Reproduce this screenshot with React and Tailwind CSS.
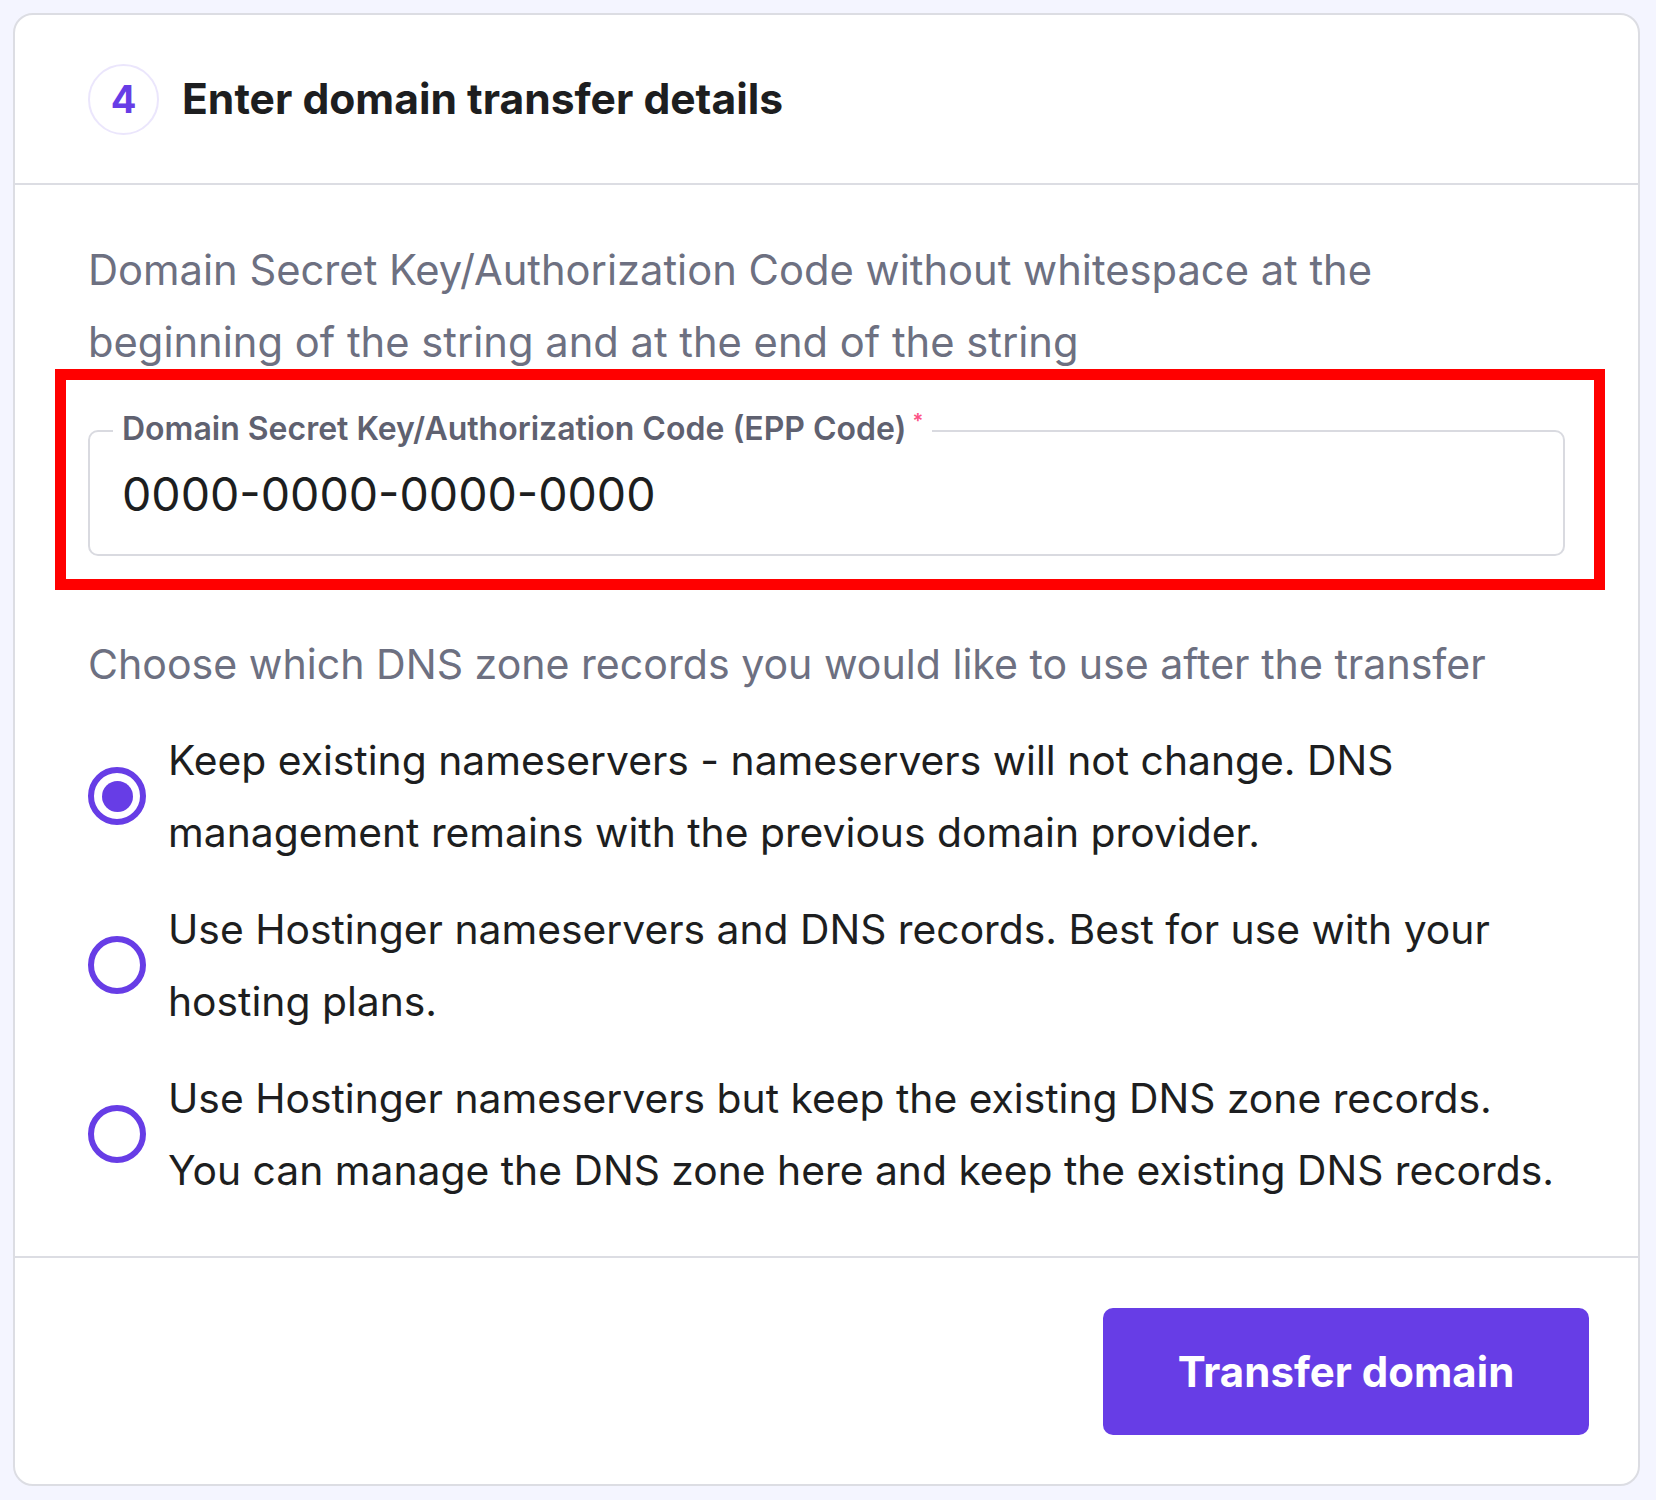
import { useState } from "react";

const options = [
  {
    id: "keep",
    lines: [
      "Keep existing nameservers - nameservers will not change. DNS",
      "management remains with the previous domain provider.",
    ],
  },
  {
    id: "hostinger",
    lines: [
      "Use Hostinger nameservers and DNS records. Best for use with your",
      "hosting plans.",
    ],
  },
  {
    id: "hybrid",
    lines: [
      "Use Hostinger nameservers but keep the existing DNS zone records.",
      "You can manage the DNS zone here and keep the existing DNS records.",
    ],
  },
];

export default function App() {
  const [choice, setChoice] = useState("keep");
  const [code, setCode] = useState("0000-0000-0000-0000");

  return (
    <div className="min-h-[1500px] bg-[#f4f5ff] pt-[13px] pl-[13px] font-['Inter',sans-serif]">
      <div className="w-[1627px] rounded-[20px] border-2 border-[#dcdde3] bg-white">
        {/* header */}
        <div className="flex h-[170px] items-center gap-[23px] border-b-2 border-[#dcdde3] pl-[73px]">
          <div className="flex h-[71px] w-[71px] items-center justify-center rounded-full border-2 border-[#ebe6fc] text-[38px] font-bold text-[#673de6]">
            4
          </div>
          <h2 className="text-[42.6px] font-bold text-[#1d1e20]">Enter domain transfer details</h2>
        </div>

        {/* body */}
        <div className="px-[73px] pt-[49px] pb-[50px]">
          <p className="text-[41.7px] leading-[72px] text-[#6d7081]">
            Domain Secret Key/Authorization Code without whitespace at the
            <br />
            beginning of the string and at the end of the string
          </p>

          <div className="relative mt-[35px]">
            <fieldset className="h-[143px] rounded-[10px] border-2 border-[#d9dae0] pl-[23px] pr-[30px]">
              <legend className="px-[9px] text-[32px] leading-[32px] font-semibold text-[#5f6170]">
                Domain Secret Key/Authorization Code (EPP Code)
                <span className="relative -top-[12px] ml-[6px] text-[20px] text-[#fc5185]">*</span>
              </legend>
              <input
                value={code}
                onChange={(e) => setCode(e.target.value)}
                className="mt-[21px] block w-full bg-transparent pl-[9px] text-[46.5px] leading-[48px] text-[#1d1e20] outline-none"
              />
            </fieldset>
            <div className="pointer-events-none absolute -top-[44px] -right-[40px] -bottom-[34px] -left-[33px] border-[11px] border-[#ff0000]" />
          </div>

          <p className="mt-[72px] text-[41.1px] leading-[72px] text-[#6d7081]">
            Choose which DNS zone records you would like to use after the transfer
          </p>

          <div className="mt-[24px] flex flex-col gap-[25px]">
            {options.map((opt) => (
              <label key={opt.id} className="flex cursor-pointer items-center gap-[22px]">
                <input
                  type="radio"
                  name="dns"
                  className="sr-only"
                  checked={choice === opt.id}
                  onChange={() => setChoice(opt.id)}
                />
                <span className="flex h-[58px] w-[58px] shrink-0 items-center justify-center rounded-full border-[6px] border-[#673de6]">
                  {choice === opt.id && <span className="h-[31px] w-[31px] rounded-full bg-[#673de6]" />}
                </span>
                <span className="whitespace-nowrap text-[40.8px] leading-[72px] text-[#1d1e20]">
                  {opt.lines[0]}
                  <br />
                  {opt.lines[1]}
                </span>
              </label>
            ))}
          </div>
        </div>

        {/* footer */}
        <div className="flex justify-end border-t-2 border-[#dcdde3] pt-[50px] pr-[49px] pb-[49px]">
          <button className="h-[127px] w-[486px] rounded-[10px] bg-[#673de6] text-[42px] font-bold text-white">
            Transfer domain
          </button>
        </div>
      </div>
    </div>
  );
}
